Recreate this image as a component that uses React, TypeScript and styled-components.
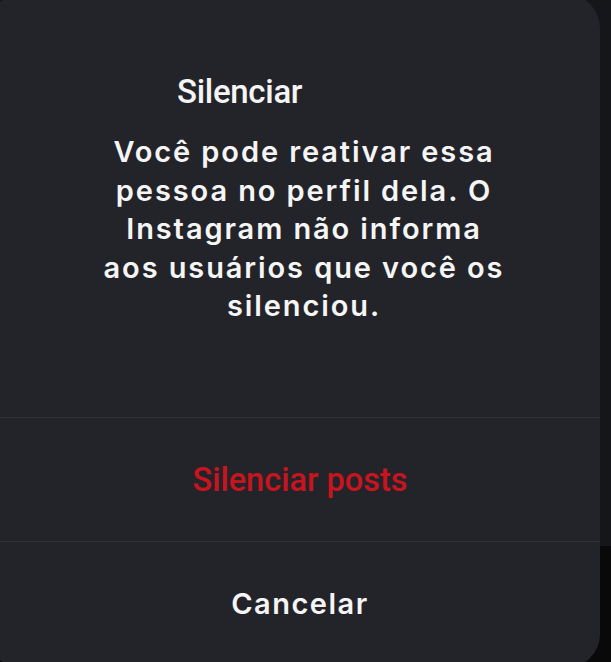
import { createGlobalStyle, styled } from "styled-components";

const GlobalStyle = createGlobalStyle`
  html, body {
    margin: 0;
    padding: 0;
    overflow: hidden;
    background: linear-gradient(to bottom, #151619 0, #151619 546px, #09090a 546px);
    height: 100%;
  }
`;

export const Screen = styled.div`
  width: 611px;
  height: 662px;
  overflow: hidden;
`;

export const Sheet = styled.div`
  display: flex;
  flex-direction: column;
  width: 612px;
  height: 674px;
  margin-top: -6px;
  margin-left: -12px;
  background: #232429;
  border-radius: 34px;
  color: #f5f5f5;
`;

export const Head = styled.div`
  display: flex;
  flex-direction: column;
  height: 423px;
  box-sizing: border-box;
  padding-top: 80px;
`;

export const Title = styled.div`
  font-family: Roboto, "Liberation Sans", sans-serif;
  font-size: 33px;
  font-weight: 500;
  line-height: 36px;
  padding-left: 189px;
  letter-spacing: -0.3px;
`;

export const Message = styled.p`
  margin: 23px 0 0 20px;
  text-align: center;
  font-family: Inter, "Noto Sans", sans-serif;
  font-size: 29px;
  font-weight: 600;
  line-height: 38.5px;
  letter-spacing: 1.9px;
`;

export const Action = styled.button<{ $danger?: boolean }>`
  display: flex;
  align-items: center;
  justify-content: center;
  height: 124px;
  border: 0;
  border-top: 1px solid #303136;
  background: transparent;
  padding: 0 0 0 12px;
  color: ${(p) => (p.$danger ? "#c8141f" : "#f5f5f5")};
  font-family: ${(p) =>
    p.$danger ? 'Roboto, "Liberation Sans", sans-serif' : 'Inter, "Noto Sans", sans-serif'};
  font-size: ${(p) => (p.$danger ? "32.5px" : "29px")};
  font-weight: ${(p) => (p.$danger ? 500 : 600)};
  letter-spacing: ${(p) => (p.$danger ? "0" : "1.5px")};
`;

export default function App() {
  return (
    <Screen>
      <GlobalStyle />
      <Sheet>
        <Head>
          <Title>Silenciar</Title>
          <Message>
            Você pode reativar essa
            <br />
            pessoa no perfil dela. O
            <br />
            Instagram não informa
            <br />
            aos usuários que você os
            <br />
            silenciou.
          </Message>
        </Head>
        <Action $danger>Silenciar posts</Action>
        <Action>Cancelar</Action>
      </Sheet>
    </Screen>
  );
}
